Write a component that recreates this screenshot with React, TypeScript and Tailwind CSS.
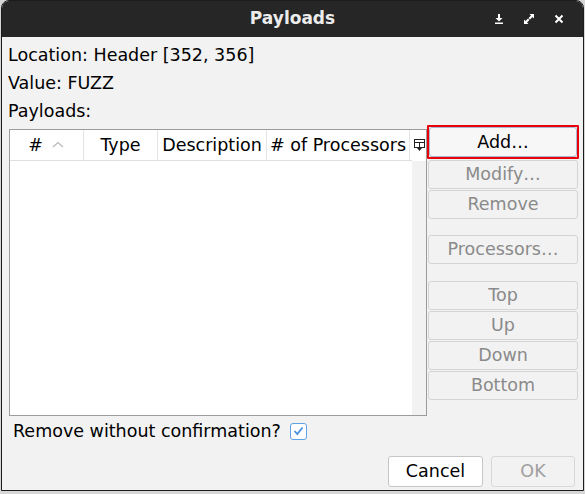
const sideButtons = [
  { label: "Modify…", gap: "" },
  { label: "Remove", gap: "" },
  { label: "Processors…", gap: "mt-[15px]" },
  { label: "Top", gap: "mt-[16px]" },
  { label: "Up", gap: "" },
  { label: "Down", gap: "" },
  { label: "Bottom", gap: "" },
];

const columns = [
  { label: "#", width: "w-[74px]", sort: true },
  { label: "Type", width: "w-[74px]", sort: false },
  { label: "Description", width: "w-[109px]", sort: false },
  { label: "# of Processors", width: "w-[143px]", sort: false },
];

function TitleIcons() {
  return (
    <div className="absolute right-[19px] top-0 flex h-[36px] items-center gap-[20px]">
      {/* minimise */}
      <svg width="10" height="10" viewBox="0 0 10 10" fill="white">
        <rect x="4" y="0" width="2" height="5" />
        <path d="M1.5 4 H8.5 L5 7.5 Z" />
        <rect x="1" y="8.5" width="8" height="1.5" />
      </svg>
      {/* maximise */}
      <svg width="10" height="10" viewBox="0 0 10 10" fill="white">
        <path d="M5.5 0 H10 V4.5 L8.5 3 L6 5.5 L4.5 4 L7 1.5 Z" />
        <path d="M4.5 10 H0 V5.5 L1.5 7 L4 4.5 L5.5 6 L3 8.5 Z" />
      </svg>
      {/* close */}
      <svg width="10" height="10" viewBox="0 0 10 10" stroke="white" strokeWidth="2">
        <path d="M1.5 1.5 L8.5 8.5 M8.5 1.5 L1.5 8.5" />
      </svg>
    </div>
  );
}

export default function App() {
  return (
    <div
      className="h-[494px] w-[585px] overflow-hidden bg-[#d6d6d6] text-[17.5px] text-black"
      style={{ fontFamily: '"DejaVu Sans", sans-serif' }}
    >
      <div className="ml-[1px] flex h-[491px] w-[583px] flex-col overflow-hidden rounded-t-[8px] border border-[#1c1c1c] bg-[#f2f2f2]">
        {/* Title bar */}
        <div className="relative flex h-[36px] shrink-0 items-center justify-center bg-[#262626]">
          <span className="text-[17px] font-bold text-[#ececec]">Payloads</span>
          <TitleIcons />
        </div>

        {/* Info */}
        <div className="px-[6px] pt-[4px] leading-[28px]">
          <div>Location: Header [352, 356]</div>
          <div>Value: FUZZ</div>
          <div>Payloads:</div>
        </div>

        {/* Table + buttons */}
        <div className="flex pl-[7px]">
          <div className="mt-[4px] flex h-[287px] w-[418px] border border-[#9c9c9c] bg-white">
            <div className="flex flex-1 flex-col">
              <div className="flex h-[31px] border-b border-[#e0e0e0]">
                {columns.map((c) => (
                  <div
                    key={c.label}
                    className={`${c.width} flex items-center justify-center border-r border-[#e4e4e4] whitespace-nowrap`}
                  >
                    {c.label}
                    {c.sort && (
                      <svg width="14" height="10" viewBox="0 0 14 10" className="ml-[8px]">
                        <path d="M2 7 L7 2.5 L12 7" fill="none" stroke="#b8b8b8" strokeWidth="1.2" />
                      </svg>
                    )}
                  </div>
                ))}
              </div>
              <div className="flex-1" />
            </div>
            <div className="flex w-[14px] flex-col bg-[#f2f2f2]">
              <div className="flex h-[31px] items-center justify-center bg-white">
                <svg width="11" height="13" viewBox="0 0 11 13">
                  <rect x="0.5" y="0.5" width="10" height="8" fill="none" stroke="#222" />
                  <path d="M0.5 3.5 H10.5 M5.5 3.5 V8.5" stroke="#222" />
                  <path d="M3 9 H8 L5.5 12 Z" fill="#222" />
                </svg>
              </div>
            </div>
          </div>

          <div className="flex w-[152px] flex-col">
            <div className="rounded-[1px] border-2 border-[#e8000b]">
              <button className="flex h-[30px] w-full items-center justify-center rounded-[3px] border border-[#a9b8cc] bg-[#f7f7f7]">
                Add…
              </button>
            </div>
            <div className="flex flex-col gap-[1px] px-[1px] pt-[1px]">
              {sideButtons.map((b) => (
                <button
                  key={b.label}
                  className={`${b.gap} flex h-[29px] w-full items-center justify-center rounded-[3px] border border-[#d4d4d4] bg-[#f2f2f2] text-[#8a8a8a]`}
                >
                  {b.label}
                </button>
              ))}
            </div>
          </div>
        </div>

        {/* Checkbox */}
        <div className="flex items-center pl-[11px] pt-[4px]">
          <span className="leading-[22px]">Remove without confirmation?</span>
          <span className="ml-[9px] flex h-[17px] w-[17px] items-center justify-center rounded-[3px] border border-[#5fa2e6] bg-white">
            <svg width="11" height="10" viewBox="0 0 11 10">
              <path d="M1.5 5 L4.3 8 L9.5 1.5" fill="none" stroke="#4a90e2" strokeWidth="1.8" />
            </svg>
          </span>
        </div>

        {/* Footer */}
        <div className="mt-auto flex justify-end gap-[8px] pb-[3px] pr-[8px]">
          <button className="flex h-[31px] w-[95px] items-center justify-center rounded-[3px] border border-[#c6c6c6] bg-white">
            Cancel
          </button>
          <button className="flex h-[31px] w-[84px] items-center justify-center rounded-[3px] border border-[#d8d8d8] bg-[#f2f2f2] text-[#a0a0a0]">
            OK
          </button>
        </div>
      </div>
    </div>
  );
}
